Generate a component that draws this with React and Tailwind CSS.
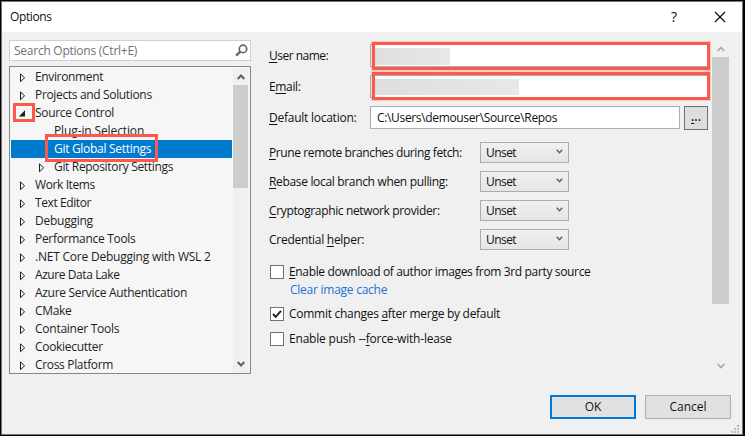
import React from "react";

const treeItems = [
  { label: "Environment", track: "tracking-[-0.36px]" },
  { label: "Projects and Solutions", track: "tracking-[-0.34px]" },
  { label: "Source Control", open: true, track: "tracking-[-0.3px]" },
  { label: "Plug-in Selection", child: true, leaf: true, track: "tracking-[-0.12px]" },
  { label: "Git Global Settings", child: true, leaf: true, selected: true, track: "tracking-[-0.3px]" },
  { label: "Git Repository Settings", child: true, track: "tracking-[-0.33px]" },
  { label: "Work Items", track: "tracking-[-0.4px]" },
  { label: "Text Editor", track: "tracking-[-0.4px]" },
  { label: "Debugging", track: "tracking-[-0.25px]" },
  { label: "Performance Tools", track: "tracking-[-0.3px]" },
  { label: ".NET Core Debugging with WSL 2", track: "tracking-[-0.22px]" },
  { label: "Azure Data Lake", track: "tracking-[-0.42px]" },
  { label: "Azure Service Authentication", track: "tracking-[-0.3px]" },
  { label: "CMake", track: "tracking-[-0.3px]" },
  { label: "Container Tools", track: "tracking-[-0.25px]" },
  { label: "Cookiecutter", track: "tracking-[-0.3px]" },
  { label: "Cross Platform", track: "tracking-[-0.33px]" },
];

function Chevron({ up, className }) {
  return (
    <svg viewBox="0 0 8 6" className={className} fill="none" stroke="currentColor">
      <path d={up ? "M0.7 5L4 1.5L7.3 5" : "M0.7 1L4 4.5L7.3 1"} />
    </svg>
  );
}

function Expander({ item }) {
  if (item.leaf) return <span className="w-[6px] shrink-0" />;
  return (
    <svg viewBox="0 0 6 9" className="h-[9px] w-[6px] shrink-0 overflow-visible">
      {item.open ? (
        <path d="M5 1.2V7.4H-1.2Z" fill="#1e1e1e" />
      ) : (
        <path d="M0.5 0.9V8.7L4.6 4.8Z" fill="none" stroke="#1e1e1e" />
      )}
    </svg>
  );
}

function TreeRow({ item }) {
  const indent = item.child ? "pl-[28px]" : "pl-[9px]";
  const tone = item.selected ? "bg-[#007acc] text-white" : "text-[#1e1e1e]";
  return (
    <div className={`relative flex h-[18px] shrink-0 items-center ${indent} ${tone}`}>
      <Expander item={item} />
      <span className={`ml-[9px] whitespace-nowrap ${item.track}`}>{item.label}</span>
      {item.open && <span className="absolute top-[-1px] left-[2px] h-[19px] w-[22px] border-3 border-[#fb5a4b]" />}
      {item.selected && <span className="absolute top-[-6px] left-[34px] z-10 h-[28px] w-[113px] border-3 border-[#fb5a4b]" />}
    </div>
  );
}

function Callout({ className }) {
  return <span className={`absolute right-[-3px] left-[1px] h-[28px] border-3 border-[#fb5a4b] shadow-[0_0_0_1px_rgba(251,90,75,0.25)] ${className}`} />;
}

function Dropdown() {
  return (
    <div className="flex h-[21px] w-[89px] items-center justify-between border border-[#acacac] bg-linear-to-b from-[#f0f0f0] to-[#e5e5e5] pr-[5px] pl-[5px]">
      <span className="tracking-[-0.55px]">Unset</span>
      <Chevron className="mb-[2px] h-[5px] w-[7px] stroke-[1.8] text-[#606060]" />
    </div>
  );
}

function SelectRow({ children, track }) {
  return (
    <div className="mb-2 flex h-[21px] items-center">
      <span className={`w-[211px] whitespace-nowrap ${track}`}>{children}</span>
      <Dropdown />
    </div>
  );
}

function CheckRow({ checked, children, track }) {
  return (
    <div className="flex h-[14px] items-center pl-px">
      <span className="flex size-[14px] items-center justify-center border border-[#707070] bg-white">
        {checked && (
          <svg viewBox="0 0 12 12" className="size-3" fill="none" stroke="#1e1e1e" strokeWidth="1.9">
            <path d="M2 6L4.7 8.9L10 2.8" />
          </svg>
        )}
      </span>
      <span className={`ml-[5px] whitespace-nowrap ${track}`}>{children}</span>
    </div>
  );
}

const K = ({ children }) => <span className="underline decoration-1 underline-offset-2">{children}</span>;

export default function App() {
  return (
    <div className="h-[436px] w-[745px] overflow-hidden bg-black pt-px pr-[2px] pb-px pl-px font-['Open_Sans','Noto_Sans',sans-serif] text-[12px] leading-[18px] text-[#111]">
      <div className="flex h-[434px] w-[742px] flex-col border border-[#777] bg-[#f0f0f0]">
        <header className="flex h-[30px] shrink-0 items-center bg-white pr-[16px] pl-[8px]">
          <span className="tracking-[-0.4px]">Options</span>
          <span className="ml-auto text-[14px]">?</span>
          <svg viewBox="0 0 12 12" className="ml-[37px] size-[12px]" fill="none" stroke="#111" strokeWidth="1.2">
            <path d="M1 1L11 11M11 1L1 11" />
          </svg>
        </header>

        <main className="flex h-[363px] shrink-0">
          <aside className="ml-[7px] w-[242px] pt-2">
            <div className="flex h-[21px] items-center justify-between border border-[#cccedb] bg-white pr-[2px] pl-1 text-[#717171]">
              <span className="tracking-[-0.25px]">Search Options (Ctrl+E)</span>
              <svg viewBox="0 0 13 13" className="size-[13px]" fill="none" stroke="#666">
                <circle cx="8" cy="4.9" r="3.7" strokeWidth="1.7" />
                <path d="M5.2 7.7L1.2 11.7" strokeWidth="2.5" />
              </svg>
            </div>
            <div className="mt-[5px] flex h-[308px] border border-[#828790] bg-[#f6f6f6] pt-px pl-px">
              <div className="flex w-[221px] flex-col">
                {treeItems.map((item) => (
                  <TreeRow key={item.label} item={item} />
                ))}
              </div>
              <div className="ml-px flex w-[15px] flex-col items-center bg-[#f0f0f0]">
                <Chevron up className="mt-[6px] h-[6px] w-[8px] stroke-2 text-[#606060]" />
                <div className="mt-[5px] h-[103px] w-[15px] bg-[#cdcdcd]" />
                <Chevron className="mt-auto mb-[6px] h-[6px] w-[8px] stroke-2 text-[#606060]" />
              </div>
            </div>
          </aside>

          <section className="ml-[18px] w-[440px] pt-[12px]">
            <div className="flex h-[23px] items-center">
              <span className="w-[101px] tracking-[-0.5px]"><K>U</K>ser name:</span>
              <div className="relative h-[23px] w-[338px] border border-[#abadb3] bg-white pt-[3px] pl-[4px]">
                <div className="h-[17px] w-[75px] bg-linear-to-r from-[#dedede] to-[#e8e8e8]" />
                <Callout className="top-[-3px]" />
              </div>
            </div>
            <div className="mt-2 flex h-[23px] items-center">
              <span className="w-[101px] tracking-[-0.35px]">E<K>m</K>ail:</span>
              <div className="relative h-[23px] w-[338px] border border-[#abadb3] bg-white pt-[3px] pl-[4px]">
                <div className="h-[16px] w-[144px] bg-linear-to-r from-[#dedede] to-[#e8e8e8]" />
                <Callout className="top-[-4px]" />
              </div>
            </div>
            <div className="mt-2 flex h-[24px] items-start">
              <span className="w-[101px] pt-[3px] tracking-[-0.25px]"><K>D</K>efault location:</span>
              <div className="h-[23px] w-[310px] border border-[#abadb3] bg-white pt-[2px] pl-[6px] tracking-[-0.34px]">C:\Users\demouser\Source\Repos</div>
              <div className="ml-1 h-[24px] w-[24px] border border-[#707070] bg-[#dddddd] pt-px text-center font-semibold"><K>.</K>..</div>
            </div>
            <div className="mt-[12px]">
              <SelectRow track="tracking-[-0.4px]"><K>P</K>rune remote branches during fetch:</SelectRow>
              <SelectRow track="tracking-[-0.33px]"><K>R</K>ebase local branch when pulling:</SelectRow>
              <SelectRow track="tracking-[-0.36px]"><K>C</K>ryptographic network provider:</SelectRow>
              <SelectRow track="tracking-[-0.27px]">Credential <K>h</K>elper:</SelectRow>
            </div>
            <div className="mt-[15px]">
              <CheckRow track="tracking-[-0.35px]"><K>E</K>nable download of author images from 3rd party source</CheckRow>
              <div className="mt-[2px] h-[18px] pl-[21px] text-[#1b74d1]">
                <span className="tracking-[-0.25px]">Clear image cache</span>
              </div>
              <div className="mt-2">
                <CheckRow checked track="tracking-[-0.28px]">Commit changes <K>a</K>fter merge by default</CheckRow>
              </div>
              <div className="mt-[11px]">
                <CheckRow track="tracking-[-0.2px]">Enable push --<K>f</K>orce-with-lease</CheckRow>
              </div>
            </div>
          </section>

          <div className="ml-[3px] flex h-[342px] w-[17px] flex-col items-center">
            <Chevron up className="mt-[14px] h-[6px] w-[8px] shrink-0 stroke-[1.6] text-[#a6a6a6]" />
            <div className="mt-[5px] h-[247px] w-[17px] shrink-0 bg-[#cdcdcd]" />
            <Chevron className="mt-auto mb-[5px] h-[6px] w-[8px] shrink-0 stroke-[1.6] text-[#a6a6a6]" />
          </div>
        </main>

        <footer className="flex grow pl-[548px]">
          <button className="h-[24px] w-[86px] border-2 border-[#0078d7] bg-[#e1e1e1]">OK</button>
          <button className="ml-[9px] h-[24px] w-[86px] border border-[#adadad] bg-[#e1e1e1]">Cancel</button>
          <svg viewBox="0 0 8 8" className="mb-px size-2 self-end" fill="#bcbcbc">
            <path d="M6 0h2v2h-2zM3 3h2v2h-2zM6 3h2v2h-2zM0 6h2v2h-2zM3 6h2v2h-2zM6 6h2v2h-2z" />
          </svg>
        </footer>
      </div>
    </div>
  );
}
